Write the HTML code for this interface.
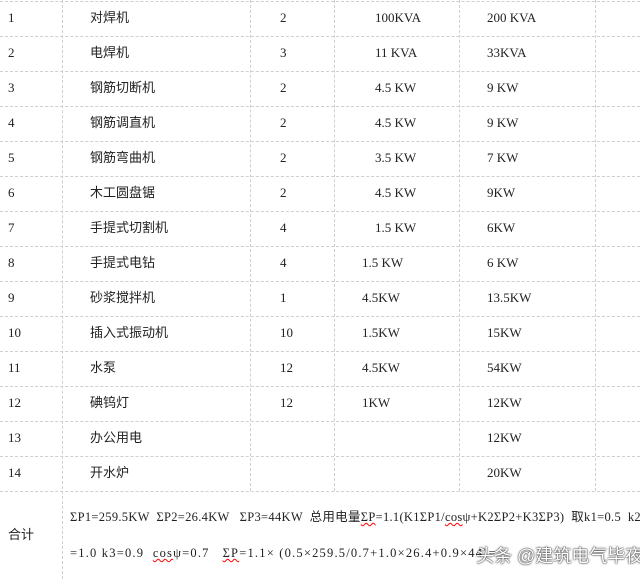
<!DOCTYPE html>
<html><head><meta charset="utf-8"><style>
body{margin:0;width:640px;height:579px;background:#fff;position:relative;overflow:hidden;font-family:"Liberation Serif","Noto Serif CJK SC",serif;font-size:13px;color:#222}
.h{position:absolute;left:0;width:640px;border-top:1px dashed #cfcfcf;height:0}
.v{position:absolute;top:0;border-left:1px dashed #cfcfcf;width:0}
.t{position:absolute;white-space:nowrap;line-height:16px}
.c{font-family:"Liberation Sans","Noto Sans CJK SC",sans-serif}
.wm{position:absolute;left:476px;top:542px;font-family:"Liberation Sans","Noto Sans CJK SC",sans-serif;font-size:18px;color:#fff;text-shadow:0 0 2px #333,0 0 1px #000;white-space:nowrap}
u{text-decoration:underline wavy red;text-decoration-thickness:1px}
</style></head><body>
<div class="h" style="top:1px"></div><div class="h" style="top:36px"></div><div class="h" style="top:71px"></div><div class="h" style="top:106px"></div><div class="h" style="top:141px"></div><div class="h" style="top:176px"></div><div class="h" style="top:211px"></div><div class="h" style="top:246px"></div><div class="h" style="top:281px"></div><div class="h" style="top:316px"></div><div class="h" style="top:351px"></div><div class="h" style="top:386px"></div><div class="h" style="top:421px"></div><div class="h" style="top:456px"></div><div class="h" style="top:491px"></div>
<div class="v" style="left:62px;height:579px"></div>
<div class="v" style="left:250px;height:491px"></div>
<div class="v" style="left:334px;height:491px"></div>
<div class="v" style="left:459px;height:491px"></div>
<div class="v" style="left:595px;height:491px"></div>
<div id="rows"></div>
<script>
var d=[["1","对焊机","2","100KVA","200 KVA",375],["2","电焊机","3","11 KVA","33KVA",375],["3","钢筋切断机","2","4.5 KW","9 KW",375],["4","钢筋调直机","2","4.5 KW","9 KW",375],["5","钢筋弯曲机","2","3.5 KW","7 KW",375],["6","木工圆盘锯","2","4.5 KW","9KW",375],["7","手提式切割机","4","1.5 KW","6KW",375],["8","手提式电钻","4","1.5 KW","6 KW",362],["9","砂浆搅拌机","1","4.5KW","13.5KW",362],["10","插入式振动机","10","1.5KW","15KW",362],["11","水泵","12","4.5KW","54KW",362],["12","碘钨灯","12","1KW","12KW",362],["13","办公用电","","","12KW",362],["14","开水炉","","","20KW",362]];
var h="";d.forEach(function(r,i){var y=10+i*35;h+='<div class="t" style="left:8px;top:'+y+'px">'+r[0]+'</div><div class="t c" style="left:90px;top:'+y+'px">'+r[1]+'</div><div class="t" style="left:280px;top:'+y+'px">'+r[2]+'</div><div class="t" style="left:'+r[5]+'px;top:'+y+'px">'+r[3]+'</div><div class="t" style="left:487px;top:'+y+'px">'+r[4]+'</div>';});
document.getElementById("rows").innerHTML=h;
</script>
<div class="t c" style="left:8px;top:527px">合计</div>
<div class="t" style="left:70px;top:509px;font-size:12.5px;letter-spacing:0.3px">ΣP1=259.5KW &nbsp;ΣP2=26.4KW &nbsp;&nbsp;ΣP3=44KW &nbsp;<span class="c">总用电量</span><u>ΣP</u>=1.1(K1ΣP1/<u>cos</u>ψ+K2ΣP2+K3ΣP3) &nbsp;<span class="c">取</span>k1=0.5 &nbsp;k2</div>
<div class="t" style="left:70px;top:545px;font-size:12.5px;letter-spacing:1.2px">=1.0 k3=0.9 &nbsp;<u>cos</u>ψ=0.7 &nbsp;&nbsp;<u>ΣP</u>=1.1× (0.5×259.5/0.7+1.0×26.4+0.9×44)=</div>
<div class="wm">头条 @建筑电气毕夜</div>
</body></html>
